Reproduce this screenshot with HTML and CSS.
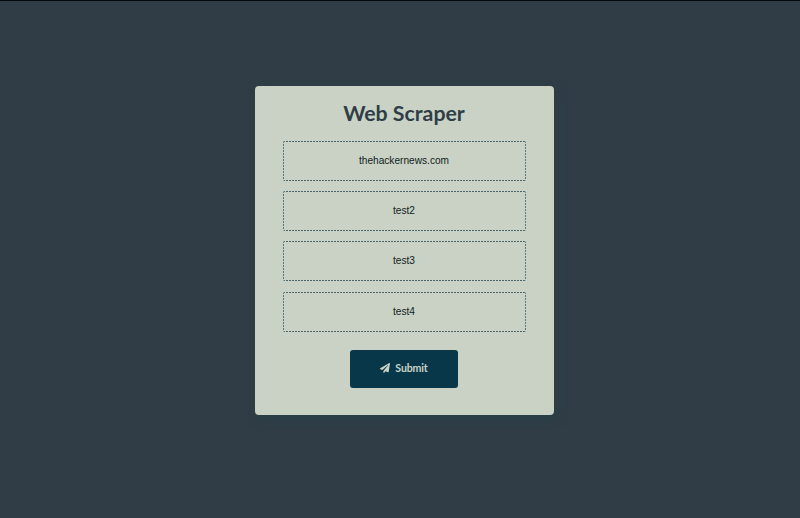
FILE: index.html
```html
<!DOCTYPE html>
<html lang="en">
<head>
<meta charset="utf-8">
<title>Web Scraper</title>
<link rel="stylesheet" href="styles.css">
</head>
<body>
<form class="card">
  <h1 class="title">Web Scraper</h1>
  <input class="field" type="text" value="thehackernews.com" aria-label="Website">
  <input class="field" type="text" value="test2" aria-label="Second value">
  <input class="field" type="text" value="test3" aria-label="Third value">
  <input class="field" type="text" value="test4" aria-label="Fourth value">
  <button class="submit" type="button">
    <svg class="plane" viewBox="0 0 512 512" aria-hidden="true"><path d="M476 3.200 12.500 270.600c-18.100 10.400-15.800 35.600 2.200 43.200L121 358.400l287.300-253.200c5.500-4.900 13.300 2.600 8.600 8.300L176 407v80.500c0 23.600 28.500 32.900 42.500 15.800L282 426l124.600 52.200c14.200 6 30.400-2.900 33-18.200l72-432C515 7.800 493.300-6.800 476 3.200z"/></svg>
    <span>Submit</span>
  </button>
</form>
</body>
</html>
```
FILE: styles.css
```css
* {
  box-sizing: border-box;
}

body {
  margin: 0;
  height: 518px;
  overflow: hidden;
  border-top: 1px solid #05090c;
  background: #303d46;
  font-family: Lato, sans-serif;
}

.card {
  display: flex;
  flex-direction: column;
  align-items: center;
  width: 299px;
  height: 329.500px;
  margin: 84.700px 0 0 254.500px;
  padding-top: 13px;
  border-radius: 4px;
  background: #cad2c5;
  box-shadow: 3px 4px 10px #293f47;
}

.title {
  margin: 0 0 14px;
  color: #2f3e46;
  font-size: 21.300px;
  line-height: 28px;
  font-weight: 700;
}

/* Fine dashes: 2px on, 1px off, along each edge */
.field {
  --dash-x: repeating-linear-gradient(90deg, #48656a 0 2px, transparent 2px 3px);
  --dash-y: repeating-linear-gradient(#5d777b 0 2px, transparent 2px 3px);
  width: 243px;
  height: 40px;
  margin: 0 0 10.400px;
  padding: 0 0 1px;
  border: 0;
  border-radius: 2px;
  outline: 0;
  background:
    var(--dash-x) top / 100% 1px no-repeat,
    var(--dash-x) bottom / 100% 1px no-repeat,
    var(--dash-y) left / 1px 100% no-repeat,
    var(--dash-y) right / 1px 100% no-repeat;
  color: #101d22;
  font: 10.150px "Liberation Sans", Arial, sans-serif;
  text-align: center;
}

.submit {
  display: flex;
  align-items: center;
  justify-content: center;
  gap: 5px;
  width: 108px;
  height: 38px;
  margin-top: 8px;
  padding: 0 0 2px;
  border: 0;
  border-radius: 3px;
  background: #073748;
  color: #cad2c5;
  font: 700 10.600px Lato, sans-serif;
  letter-spacing: -0.150px;
}

.plane {
  width: 10px;
  height: 10px;
  fill: currentColor;
}
```
